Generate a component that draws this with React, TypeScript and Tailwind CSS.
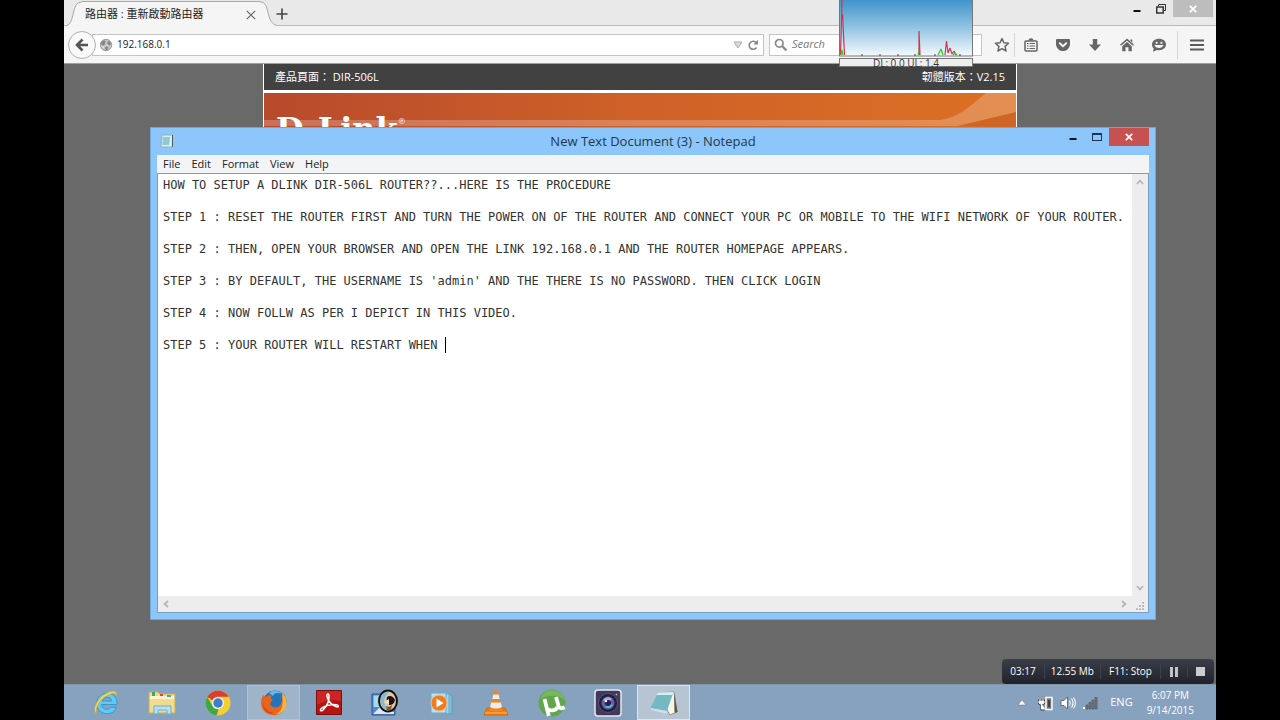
import type { ReactNode } from 'react'

const NOTE_LINES = [
  'HOW TO SETUP A DLINK DIR-506L ROUTER??...HERE IS THE PROCEDURE',
  '',
  'STEP 1 : RESET THE ROUTER FIRST AND TURN THE POWER ON OF THE ROUTER AND CONNECT YOUR PC OR MOBILE TO THE WIFI NETWORK OF YOUR ROUTER.',
  '',
  'STEP 2 : THEN, OPEN YOUR BROWSER AND OPEN THE LINK 192.168.0.1 AND THE ROUTER HOMEPAGE APPEARS.',
  '',
  "STEP 3 : BY DEFAULT, THE USERNAME IS 'admin' AND THE THERE IS NO PASSWORD. THEN CLICK LOGIN",
  '',
  'STEP 4 : NOW FOLLW AS PER I DEPICT IN THIS VIDEO.',
  '',
  'STEP 5 : YOUR ROUTER WILL RESTART WHEN ',
]

const LINE_HEIGHT = 16

function StarIcon() {
  return (
    <svg viewBox="0 0 16 16" aria-hidden="true" className="h-4 w-4" fill="none" stroke="#666" strokeWidth="1.5" strokeLinejoin="round">
      <path d="M8 1.600l1.900 4.200 4.600.5-3.400 3.100.9 4.600L8 11.700 4 14l.9-4.600L1.500 6.300l4.600-.5z" />
    </svg>
  )
}

function ClipboardIcon() {
  return (
    <svg viewBox="0 0 16 16" aria-hidden="true" className="h-4 w-4">
      <rect x="2" y="4" width="12" height="10" rx="1" fill="none" stroke="#666" strokeWidth="1.500" />
      <path d="M5.500 3.500a2.500 2.200 0 015 0z" fill="#666" />
      <path d="M4 6.500h1.500M4 9h1.500M4 11.500h1.500M6.500 6.500H12M6.500 9H12M6.500 11.500H12" stroke="#666" strokeWidth="1.100" />
    </svg>
  )
}

function PocketIcon() {
  return (
    <svg viewBox="0 0 16 16" aria-hidden="true" className="h-4 w-4">
      <path d="M2.200 2h11.600c.8 0 1.200.5 1.200 1.200v4.300A7 7 0 018 14a7 7 0 01-7-6.500V3.200C1 2.500 1.400 2 2.200 2z" fill="#666" />
      <path d="M4.800 6.200L8 9.300l3.200-3.100" fill="none" stroke="#f5f5f5" strokeWidth="1.900" strokeLinecap="round" strokeLinejoin="round" />
    </svg>
  )
}

function DownloadIcon() {
  return (
    <svg viewBox="0 0 16 16" aria-hidden="true" className="h-4 w-4">
      <path d="M5.800 2h4.400v5.500H14L8 14 2 7.500h3.800z" fill="#666" />
    </svg>
  )
}

function HomeIcon() {
  return (
    <svg viewBox="0 0 16 16" aria-hidden="true" className="h-4 w-4">
      <path d="M8 1.500l7 6.300-1 1L8 3.700 2 8.800l-1-1zM11.500 2.500h1.800v3l-1.800-1.600z" fill="#666" />
      <path d="M8 5l4.800 4.200v5H9.500v-4h-3v4H3.200v-5z" fill="#666" />
    </svg>
  )
}

function ChatIcon() {
  return (
    <svg viewBox="0 0 16 16" aria-hidden="true" className="h-4 w-4">
      <path d="M8 1.800c4 0 7 2.400 7 5.700s-3 5.700-7 5.700c-.7 0-1.400-.1-2-.2L2 14.800l.7-3.200C1.600 10.500 1 9 1 7.500c0-3.300 3-5.700 7-5.700z" fill="#666" />
      <circle cx="5.600" cy="5.800" r="1.100" fill="#f5f5f5" />
      <circle cx="10.400" cy="5.800" r="1.100" fill="#f5f5f5" />
      <path d="M3.500 8h9c-.6 1.900-2.300 3-4.500 3s-3.900-1.100-4.500-3z" fill="#f5f5f5" />
    </svg>
  )
}

function MenuIcon() {
  return (
    <svg viewBox="0 0 16 16" aria-hidden="true" className="h-4 w-4">
      <path d="M1 3.500h14M1 8h14M1 12.500h14" stroke="#5a5a5a" strokeWidth="2.200" />
    </svg>
  )
}

function GlobeIcon() {
  return (
    <svg viewBox="0 0 14 14" aria-hidden="true" className="h-3.5 w-3.5 shrink-0">
      <circle cx="7" cy="7" r="5.700" fill="#c6c6c6" stroke="#9a9a9a" />
      <path d="M2 4.500l3-2.300 1.800.8-1 1.700.5 1.200-2 1.800-1.700-.6zM8.500 3.500l2.300-.2 1.200 3-1.800 1-2-1.300zM6 9l2-.6 1.500 1.200-1.300 2.400-1.700.2z" fill="#868686" />
      <path d="M3 8.500l2 1M8 6.500l-1 1" stroke="#eee" />
    </svg>
  )
}

function MinimizeGlyph() {
  return (
    <svg viewBox="0 0 10 10" aria-hidden="true" className="h-2.5 w-2.5">
      <path d="M1.500 7h7" stroke="#111" strokeWidth="2" />
    </svg>
  )
}

function CloseGlyph() {
  return (
    <svg viewBox="0 0 10 10" aria-hidden="true" className="h-2.5 w-2.5">
      <path d="M1.800 1.800l6.400 6.400M8.200 1.800L1.800 8.200" stroke="#fff" strokeWidth="1.700" />
    </svg>
  )
}

function Chevron({ d }: { d: string }) {
  return (
    <svg viewBox="0 0 8 8" aria-hidden="true" className="h-2 w-2" fill="none" stroke="#b4b4b4" strokeWidth="1.700">
      <path d={d} />
    </svg>
  )
}

function BrowserTabs() {
  return (
    <div className="flex h-[26px] items-stretch bg-[#e9e9e9]">
      <svg viewBox="0 0 18 26" aria-hidden="true" className="h-[27px] w-[18px] shrink-0">
        <path d="M0 25.500C6 25 7 22 9 14S12 1.500 18 1.500V26H0z" fill="#f5f5f5" />
        <path d="M0 25.500C6 25 7 22 9 14S12 1.500 18 1.500" fill="none" stroke="#a8a8a8" />
      </svg>
      <div className="mt-px flex h-[26px] w-[178px] items-center justify-between border-t border-[#a8a8a8] bg-[#f5f5f5] pr-px pl-[3px]">
        <span className="text-[11px] text-[#222]">路由器 : 重新啟動路由器</span>
        <button type="button" aria-label="Close tab" className="flex h-4 w-4 items-center justify-center">
          <svg viewBox="0 0 10 10" aria-hidden="true" className="h-2.5 w-2.5">
            <path d="M.8.8l8.400 8.400M9.200.8L.8 9.200" stroke="#666" strokeWidth="1.200" />
          </svg>
        </button>
      </div>
      <svg viewBox="0 0 20 26" aria-hidden="true" className="h-[27px] w-5 shrink-0">
        <path d="M0 1.500c6 0 6.500 5 8.500 12.500S13 25 20 25.500V26H0z" fill="#f5f5f5" />
        <path d="M0 1.500c6 0 6.500 5 8.500 12.500S13 25 20 25.500" fill="none" stroke="#a8a8a8" />
      </svg>
      <div className="flex flex-1 border-b border-[#b9b9b9]">
        <button type="button" aria-label="New tab" className="-ml-2 flex h-7 w-5 items-center justify-center self-start">
          <svg viewBox="0 0 12 12" aria-hidden="true" className="h-3 w-3 shrink-0">
            <path d="M6 .5v11M.5 6h11" stroke="#444" strokeWidth="1.600" />
          </svg>
        </button>
        <div className="mr-[3px] ml-auto flex h-[17px] items-center">
          <button type="button" aria-label="Minimize browser" className="flex h-full w-6 items-center justify-center">
            <MinimizeGlyph />
          </button>
          <button type="button" aria-label="Restore browser" className="flex h-full w-6 items-center justify-center">
            <svg viewBox="0 0 10 10" aria-hidden="true" className="h-2.5 w-2.5" fill="none" stroke="#333">
              <path d="M2.500 2.500v-2h7v6H8" />
              <rect x=".7" y="3" width="6.500" height="6" strokeWidth="1.500" />
            </svg>
          </button>
          <button type="button" aria-label="Close browser" className="flex h-full w-10 items-center justify-center bg-[#bdbdbd]">
            <CloseGlyph />
          </button>
        </div>
      </div>
    </div>
  )
}

function ToolbarButton({ label, children }: { label: string; children: ReactNode }) {
  return (
    <button type="button" aria-label={label} className="flex h-6 w-8 items-center justify-center">
      {children}
    </button>
  )
}

function BrowserToolbar() {
  return (
    <div className="flex h-[38px] items-center border-b border-[#a0a0a0] bg-[#f5f5f5]">
      <button type="button" aria-label="Back" className="z-10 ml-1 flex h-7 w-7 shrink-0 items-center justify-center rounded-full border border-[#b0b0b0] bg-[#f9f9f9]">
        <svg viewBox="0 0 14 14" aria-hidden="true" className="h-3.5 w-3.5">
          <path d="M7.500 1.500L2 7l5.500 5.500M2.500 7H13" fill="none" stroke="#555" strokeWidth="2.600" />
        </svg>
      </button>
      <div className="-ml-1 flex h-[22px] flex-1 items-center border border-[#c4c4c4] bg-white pl-1.5">
        <GlobeIcon />
        <input aria-label="Address" defaultValue="192.168.0.1" className="ml-1 min-w-0 flex-1 text-[10px] text-[#222] outline-none" />
        <svg viewBox="0 0 10 8" aria-hidden="true" className="h-2 w-2.5">
          <path d="M1 1h8L5 7z" fill="#ddd" stroke="#aaa" />
        </svg>
        <button type="button" aria-label="Reload" className="flex h-5 w-5 items-center justify-center">
          <svg viewBox="0 0 12 12" aria-hidden="true" className="h-3 w-3">
            <path d="M9.500 8.500a4 4 0 11-.5-5" fill="none" stroke="#888" strokeWidth="1.600" />
            <path d="M11 .8V5.500H6.300z" fill="#888" />
          </svg>
        </button>
      </div>
      <div className="ml-[5px] flex h-[22px] w-[213px] items-center border border-[#c4c4c4] bg-white pl-1">
        <svg viewBox="0 0 14 14" aria-hidden="true" className="h-3.5 w-3.5 shrink-0">
          <circle cx="5.300" cy="5.300" r="3.800" fill="none" stroke="#888" strokeWidth="1.700" />
          <path d="M8 8l4.500 4.500" stroke="#888" strokeWidth="2.300" />
        </svg>
        <input aria-label="Search" placeholder="Search" className="ml-1 min-w-0 flex-1 text-[11px] italic outline-none placeholder:text-[#777]" />
      </div>
      <div className="ml-1 flex items-center">
        <ToolbarButton label="Bookmark this page"><StarIcon /></ToolbarButton>
        <div className="-ml-1 flex border-l border-[#d6d6d6]">
          <ToolbarButton label="Bookmarks"><ClipboardIcon /></ToolbarButton>
        </div>
        <ToolbarButton label="Pocket"><PocketIcon /></ToolbarButton>
        <ToolbarButton label="Downloads"><DownloadIcon /></ToolbarButton>
        <ToolbarButton label="Home"><HomeIcon /></ToolbarButton>
        <ToolbarButton label="Chat"><ChatIcon /></ToolbarButton>
        <div className="ml-0.5 flex h-7 items-center border-l border-[#d6d6d6] px-[3px]">
          <ToolbarButton label="Open menu"><MenuIcon /></ToolbarButton>
        </div>
      </div>
    </div>
  )
}

function RouterPage() {
  return (
    <div className="flex-1 overflow-hidden bg-[#696969]">
      <div className="mx-auto h-32 w-[66%] max-w-[754px] border-x border-white bg-white">
        <div className="flex h-[26px] items-center justify-between bg-[#414141] px-[11px] text-[11px] text-white">
          <span>產品頁面： DIR-506L</span>
          <span>韌體版本：V2.15</span>
        </div>
        <div className="relative mt-[3px] h-24 overflow-hidden bg-linear-to-r from-[#b84a2c] via-[#cf6128] to-[#dc7023]">
          <svg viewBox="0 0 752 96" preserveAspectRatio="none" aria-hidden="true" className="absolute inset-0 h-full w-full">
            <path d="M0 27h676c18-2 30-14 46-27h30v20l-58 13H0z" fill="#fff" fillOpacity=".22" />
            <path d="M694 33l58-14v15z" fill="#cf6424" />
          </svg>
          <span className="absolute top-5 left-3 font-['DejaVu_Serif','Liberation_Serif',serif] text-[32px] leading-8 font-bold text-white">
            D-Link<sup className="align-super text-[8px] font-normal">®</sup>
          </span>
        </div>
      </div>
    </div>
  )
}

function NetMeter() {
  return (
    <div className="absolute top-0 right-[243px] z-20 w-[134px]">
      <svg viewBox="0 0 134 57" aria-hidden="true" className="h-[57px] w-full">
        <defs>
          <linearGradient id="meter-sky" x1="0" y1="0" x2="0" y2="1">
            <stop offset="0" stopColor="#3b93c9" />
            <stop offset=".5" stopColor="#92c4e2" />
            <stop offset="1" stopColor="#f4fafd" />
          </linearGradient>
        </defs>
        <rect x=".5" y="-1" width="133" height="57" fill="url(#meter-sky)" stroke="#777" />
        <path d="M1.500 55L3 0M3.500 14L5.500 55M80 55V31l1 24M106 55l1.500-14 1.500 12 2-5 2 6 2-3 2 4" fill="none" stroke="#d3354c" strokeWidth="1.200" strokeLinejoin="bevel" />
        <path d="M2 55l1-5 1 5M79 55l1-4M99 55l3-6 2 6M114 55l2-2 2 2" fill="none" stroke="#3c3" strokeWidth="1.300" strokeLinejoin="bevel" />
        <path d="M23 54v2M41 54v2M59 54v2M76 54v2M96 54v2M121 54v2" stroke="#633" />
      </svg>
      <div className="mt-px flex h-[9px] items-center justify-center border border-[#777] bg-[#eee] text-[10px] leading-2 text-[#333]">
        DL: 0.0 UL: 1.4
      </div>
    </div>
  )
}

function Notepad() {
  const lastLine = NOTE_LINES.length - 1

  return (
    <section aria-label="Notepad" className="absolute top-[127px] right-[60px] bottom-[100px] left-[86px] z-10 flex flex-col border border-[#6fa6d6] bg-[#8dc6fa] px-1.5 pb-1.5">
      <header className="relative flex h-[27px] shrink-0 items-center justify-center">
        <svg viewBox="0 0 14 14" aria-hidden="true" className="absolute top-1.5 left-[3px] h-3.5 w-3.5">
          <path d="M2 1h10.500v12H1z" fill="#d5f0f2" stroke="#8fb0b8" />
          <path d="M3 3h7l-1 8H2.500z" fill="#8fc9d2" />
          <path d="M12.500 1v12" stroke="#555" />
        </svg>
        <h1 className="text-[13px] text-[#24384c]">New Text Document (3) - Notepad</h1>
        <div className="absolute top-0 right-0 flex h-[18px]">
          <button type="button" aria-label="Minimize" className="flex w-6 items-center justify-center"><MinimizeGlyph /></button>
          <button type="button" aria-label="Maximize" className="flex w-6 items-center justify-center">
            <svg viewBox="0 0 10 10" aria-hidden="true" className="h-2.5 w-2.5">
              <rect x=".5" y="1.500" width="9" height="7" fill="none" stroke="#1d3550" />
              <path d="M0 2h10" stroke="#1d3550" strokeWidth="2" />
            </svg>
          </button>
          <button type="button" aria-label="Close" className="flex w-10 items-center justify-center bg-[#c75050]"><CloseGlyph /></button>
        </div>
      </header>
      <nav className="flex h-[18px] shrink-0 items-center gap-[11px] bg-[#f3f4f6] px-1.5 text-[11px] text-[#222]">
        <button type="button">File</button>
        <button type="button">Edit</button>
        <button type="button">Format</button>
        <button type="button">View</button>
        <button type="button">Help</button>
      </nav>
      <div className="grid min-h-0 flex-1 grid-cols-[1fr_16px] grid-rows-[1fr_16px] border border-[#7b9ebd] bg-[#ededed]">
        <div className="relative bg-white font-['DejaVu_Sans_Mono','Liberation_Mono',monospace] text-[12px] leading-4">
          <textarea
            aria-label="Document text"
            wrap="off"
            spellCheck={false}
            defaultValue={NOTE_LINES.join('\n')}
            className="block h-full w-full resize-none overflow-hidden px-[5px] py-[3px] whitespace-pre text-[#333] outline-none"
          />
          <span
            aria-hidden="true"
            className="absolute mt-[3px] ml-[5px] h-4 w-px bg-black"
            style={{ left: `${NOTE_LINES[lastLine].length}ch`, top: lastLine * LINE_HEIGHT }}
          />
        </div>
        <div className="flex flex-col items-center justify-between py-1">
          <Chevron d="M1 6l3-3.500L7 6" />
          <Chevron d="M1 2l3 3.500L7 2" />
        </div>
        <div className="flex items-center justify-between px-1">
          <Chevron d="M6 1L2.500 4 6 7" />
          <Chevron d="M2 1l3.500 3L2 7" />
        </div>
        <div className="flex items-end justify-center pb-0.5">
          <svg viewBox="0 0 9 9" aria-hidden="true" className="h-2 w-2" fill="#b4b4b4">
            <path d="M7 0h2v2H7zM7 3.500h2v2H7zM7 7h2v2H7zM3.500 3.500h2v2h-2zM3.500 7h2v2h-2zM0 7h2v2H0z" />
          </svg>
        </div>
      </div>
    </section>
  )
}

function RecorderBar() {
  return (
    <div className="absolute right-0.5 bottom-9 z-20 flex h-[25px] items-center divide-x divide-[#3c404a] rounded bg-linear-to-b from-[#3a3e48] to-[#20232c] text-[10px] text-white">
      <span className="px-2">03:17</span>
      <span className="px-1.5">12.55 Mb</span>
      <button type="button" className="px-2">F11: Stop</button>
      <button type="button" aria-label="Pause" className="px-2">
        <svg viewBox="0 0 10 10" aria-hidden="true" className="h-2.5 w-2.5"><path d="M1 0h3v10H1zM6 0h3v10H6z" fill="#c4c4c4" /></svg>
      </button>
      <button type="button" aria-label="Stop" className="px-2">
        <svg viewBox="0 0 10 10" aria-hidden="true" className="h-2.5 w-2.5"><path d="M0 0h9v9H0z" fill="#ccc" /></svg>
      </button>
    </div>
  )
}

interface TaskApp {
  name: string
  state?: 'running' | 'active'
  icon: ReactNode
}

const TASK_APPS: TaskApp[] = [
  {
    name: 'Internet Explorer',
    icon: (
      <>
        <path d="M25 15.500H9.500c.3 3 2.500 4.800 5.400 4.800 2 0 3.300-.7 4.100-2h5.400c-1.500 4.200-4.800 6.400-9.300 6.400-6 0-10.300-4.200-10.300-10.200S9.100 4.200 15.100 4.200C21.200 4.200 25.500 8.500 25 15.500zM19.800 12c-.4-2.300-2.100-3.700-4.600-3.700-2.400 0-4.200 1.400-4.900 3.700z" fill="#5fcbf5" stroke="#2b8fcd" strokeWidth=".8" />
        <path d="M4.500 24.500C-1 21 6 7 17 3c5-1.800 8.500-.5 8 4-1-3-4-3.200-8.500-1C8 9.500 3 19 4.500 24.500z" fill="#f3d653" stroke="#c8a52d" strokeWidth=".5" />
      </>
    ),
  },
  {
    name: 'File Explorer',
    icon: (
      <>
        <path d="M1 3h9l1.500 2H27v19H1z" fill="#f1dc8d" stroke="#c9ae57" />
        <path d="M2 7h24v3H2z" fill="#fff5c9" />
        <path d="M4 3h3v4H4z" fill="#3ca86b" />
        <path d="M12 5h3v2h-3z" fill="#d64b3d" />
        <path d="M19 6h4v2h-4z" fill="#46a0d8" />
        <path d="M6 25v-8h17v8h-4v-4h-9v4z" fill="#b6e0f5" stroke="#68add3" />
      </>
    ),
  },
  {
    name: 'Chrome',
    icon: (
      <>
        <circle cx="14" cy="14" r="12.500" fill="#f4cf2f" />
        <path d="M3.200 7.700A12.500 12.500 0 0124.800 7.700H14a6.300 6.300 0 00-5.700 3.600z" fill="#dc3d31" />
        <path d="M3.200 7.700L8.500 17A6.300 6.300 0 0014.500 20.200L12.500 26.400A12.500 12.500 0 013.200 7.700z" fill="#3fa650" />
        <circle cx="14" cy="14" r="6" fill="#f4f4ee" />
        <circle cx="14" cy="14" r="4.700" fill="#3e7ccc" />
      </>
    ),
  },
  {
    name: 'Firefox',
    state: 'running',
    icon: (
      <>
        <circle cx="15" cy="13" r="11.500" fill="#2374b8" />
        <path d="M9 4c4-4 10-3 13 1-4-2-8-1-9 2z" fill="#62b7e5" />
        <path d="M3 6l3 2c2-2 4-2 6-1-2 2-1 3 1 4-2 1-2 2-3 4 2 4 8 5 11 0 2-4 1-7 0-9 4 3 6 7 5 11-2 7-8 10-14 9C4 25 1 19 1 14c0-4 1-6 2-8z" fill="#e86520" />
        <path d="M22 4c5 4 6 11 3 16-2 3-5 5-9 5 6-3 8-8 6-21z" fill="#f6b63b" />
        <path d="M3 12c0 7 4 11 11 12-6 2-12-3-11-12z" fill="#c94322" />
      </>
    ),
  },
  {
    name: 'Adobe Reader',
    icon: (
      <>
        <path d="M1.500 1.500h25v24h-25z" fill="#b91414" stroke="#7d0c0c" />
        <path d="M2 2h24v10C17 10 9 12 2 16z" fill="#d33" fillOpacity=".55" />
        <path d="M13 5c-2 0-1 4 1 7s6 6 9 6c2-3-8-4-16 1-3 2-1 4 1 2 3-3 6-8 6-13 0-2 0-3-1-3z" fill="none" stroke="#fff" strokeWidth="1.500" />
      </>
    ),
  },
  {
    name: 'Picture viewer',
    icon: (
      <>
        <path d="M1 5h23v21H1z" fill="#5b86c4" stroke="#2f4f96" />
        <path d="M2.500 6.500h12V18h-12z" fill="#9fdcf0" />
        <path d="M2 25l7-7 5 4 9 1v2z" fill="#dfe6f5" />
        <ellipse cx="17" cy="12" rx="9" ry="10.500" fill="#e6c4a0" stroke="#101418" strokeWidth="2" />
        <path d="M10 7c2-3 5-4 8-4-3 3-5 6-5 10l3 8c-5-1-7-7-6-14z" fill="#79bedc" />
        <path d="M16 8c3-2 6-1 8 3-1 4-3 5-6 5-2-2-3-5-2-8z" fill="#1a1416" />
        <path d="M13 13l5-3v6z" fill="#f2dcc2" />
        <path d="M15 17c2 1 4 1 6-1l-1 5-4 .5z" fill="#8c5530" />
      </>
    ),
  },
  {
    name: 'Media Player',
    icon: (
      <>
        <path d="M8 5l17 1v19l-17-1z" fill="#7fc0df" stroke="#5d9dbe" />
        <path d="M6 4.500l16 .5v19.500L6 24z" fill="#a4d6ea" stroke="#6baac8" />
        <path d="M4 4h15v20H4z" fill="#b8e0f0" stroke="#6baac8" />
        <circle cx="12" cy="14" r="8" fill="#ed7d24" stroke="#f6bb87" />
        <path d="M9.500 9.500v9l7-4.500z" fill="#fff" />
      </>
    ),
  },
  {
    name: 'VLC',
    icon: (
      <>
        <path d="M5 19h18l3 7H2z" fill="#ef7d13" stroke="#c95d08" strokeWidth=".7" />
        <path d="M12.500 1h3l5 20c-3 2-10 2-13 0z" fill="#f08421" />
        <path d="M11.400 5.500h5.200l1.200 4.500h-7.600zM9.300 13.500h9.400l1.200 4.500c-3.500 2-8.300 2-11.800 0z" fill="#ececec" />
        <path d="M3 24h22" stroke="#ffbc56" />
      </>
    ),
  },
  {
    name: 'uTorrent',
    icon: (
      <>
        <circle cx="14" cy="14" r="13.500" fill="#60a64c" />
        <path d="M14 1a13 13 0 0113 11C21 5 12 6 2 10a13 13 0 0112-9z" fill="#86c16b" fillOpacity=".6" />
        <path d="M6.500 10l4.300 17M9 19.500c2.500 3 9 2.500 10.500-1.500M18 8l2.700 9.500c.6 2 3 2.300 6 .8" fill="none" stroke="#fff" strokeWidth="3.800" />
      </>
    ),
  },
  {
    name: 'Camera',
    icon: (
      <>
        <rect x="1" y="1" width="26" height="26" rx="3" fill="#40395a" stroke="#e9e7f0" strokeWidth="1.500" />
        <circle cx="14" cy="14" r="9.500" fill="#211f3c" stroke="#5a4f7a" />
        <circle cx="14" cy="14" r="6.500" fill="#6360a8" />
        <path d="M9 11c2-3 6-4 9-1l-4 4z" fill="#a6a7e4" />
        <path d="M11 18c3 2 6 1 8-2l-4-2z" fill="#4ac0c8" />
        <circle cx="14" cy="14" r="3" fill="#2a1c48" />
        <circle cx="12" cy="12" r="1.200" fill="#fff" />
        <circle cx="22.500" cy="5.500" r="1" fill="#aaa" />
      </>
    ),
  },
  {
    name: 'Notepad',
    state: 'active',
    icon: (
      <>
        <path d="M8 4l16-1 3 20-7 3z" fill="#f7f4e8" stroke="#777" strokeWidth=".7" />
        <path d="M24 3l3.500 20-3 1z" fill="#5c5549" />
        <path d="M8 3.500l15.500-.5-6.500 19L.5 19z" fill="#75b8c4" />
        <path d="M8 3.500l15.500-.5-1 3L6.500 6z" fill="#d8edf0" />
        <path d="M.5 19l16.500 3v3L1 21z" fill="#c9e0e4" />
      </>
    ),
  },
]

function TaskButton({ app }: { app: TaskApp }) {
  const tone =
    app.state === 'active'
      ? 'border-[#dde6ee] bg-[#b7c5d3]'
      : app.state === 'running'
        ? 'border-[#b1c2d2] bg-[#9fb4c9]'
        : 'border-transparent'

  return (
    <button type="button" aria-label={app.name} className={`flex h-[35px] min-w-0 items-center justify-center border ${tone}`}>
      <svg viewBox="0 0 28 28" aria-hidden="true" className="h-7 w-7">{app.icon}</svg>
    </button>
  )
}

function Taskbar() {
  return (
    <footer className="flex h-9 shrink-0 items-center justify-between border-t border-[#8295a8] bg-[#87a2be] pr-[22px] pl-4">
      <div className="grid w-[610px] grid-cols-11 gap-[3px]">
        {TASK_APPS.map(app => <TaskButton key={app.name} app={app} />)}
      </div>
      <div className="flex items-center text-[11px] text-white">
        <button type="button" aria-label="Show hidden icons" className="mr-3">
          <svg viewBox="0 0 8 6" aria-hidden="true" className="h-1.5 w-2"><path d="M4 0l4 5H0z" fill="#fff" stroke="#667" strokeWidth=".5" /></svg>
        </button>
        <svg viewBox="0 0 16 16" aria-hidden="true" className="mr-1.5 h-4 w-4">
          <path d="M2 1.500v4M5 1.500v4M.5 5.500h6v2.500l-2 1.500h-2L.5 8zM3.500 9v5.500H7" fill="#fff" stroke="#444" strokeWidth="2" />
          <path d="M2 1.500v4M5 1.500v4M1 6h5v2l-1.500 1h-2L1 8zM3.500 9v5H7" fill="#fff" stroke="#fff" />
          <rect x="8" y="2.500" width="6" height="12" fill="#777" stroke="#fff" strokeWidth="1.500" />
          <path d="M10 5h2v7h-2z" fill="#444" />
        </svg>
        <svg viewBox="0 0 16 16" aria-hidden="true" className="mr-1.5 h-4 w-4">
          <path d="M1 5.500h3L7.500 2v12L4 10.500H1z" fill="#fff" stroke="#555" strokeWidth=".8" />
          <path d="M9.500 5.500c1 1.500 1 3.500 0 5M11.500 3.500c2 2.500 2 6.500 0 9M13.500 2.500c2.500 3 2.500 8 0 11" fill="none" stroke="#fff" strokeWidth="1.100" />
        </svg>
        <svg viewBox="0 0 16 16" aria-hidden="true" className="mr-3 h-4 w-4">
          <path d="M1 12h2v2H1z" fill="#fff" />
          <path d="M4 10h2v4H4zM7 7.500h2V14H7zM10 5h2v9h-2zM13 2.500h2V14h-2z" fill="#777" stroke="#525b66" strokeWidth=".8" />
        </svg>
        <span>ENG</span>
        <div className="ml-3.5 text-center text-[10px] leading-[15px]">
          <div>6:07 PM</div>
          <div>9/14/2015</div>
        </div>
      </div>
    </footer>
  )
}

export default function App() {
  return (
    <div className="h-screen bg-black px-16 font-['Open_Sans','Noto_Sans_CJK_TC',sans-serif]">
      <main className="relative flex h-full flex-col overflow-hidden">
        <BrowserTabs />
        <BrowserToolbar />
        <RouterPage />
        <NetMeter />
        <Notepad />
        <RecorderBar />
        <Taskbar />
      </main>
    </div>
  )
}
